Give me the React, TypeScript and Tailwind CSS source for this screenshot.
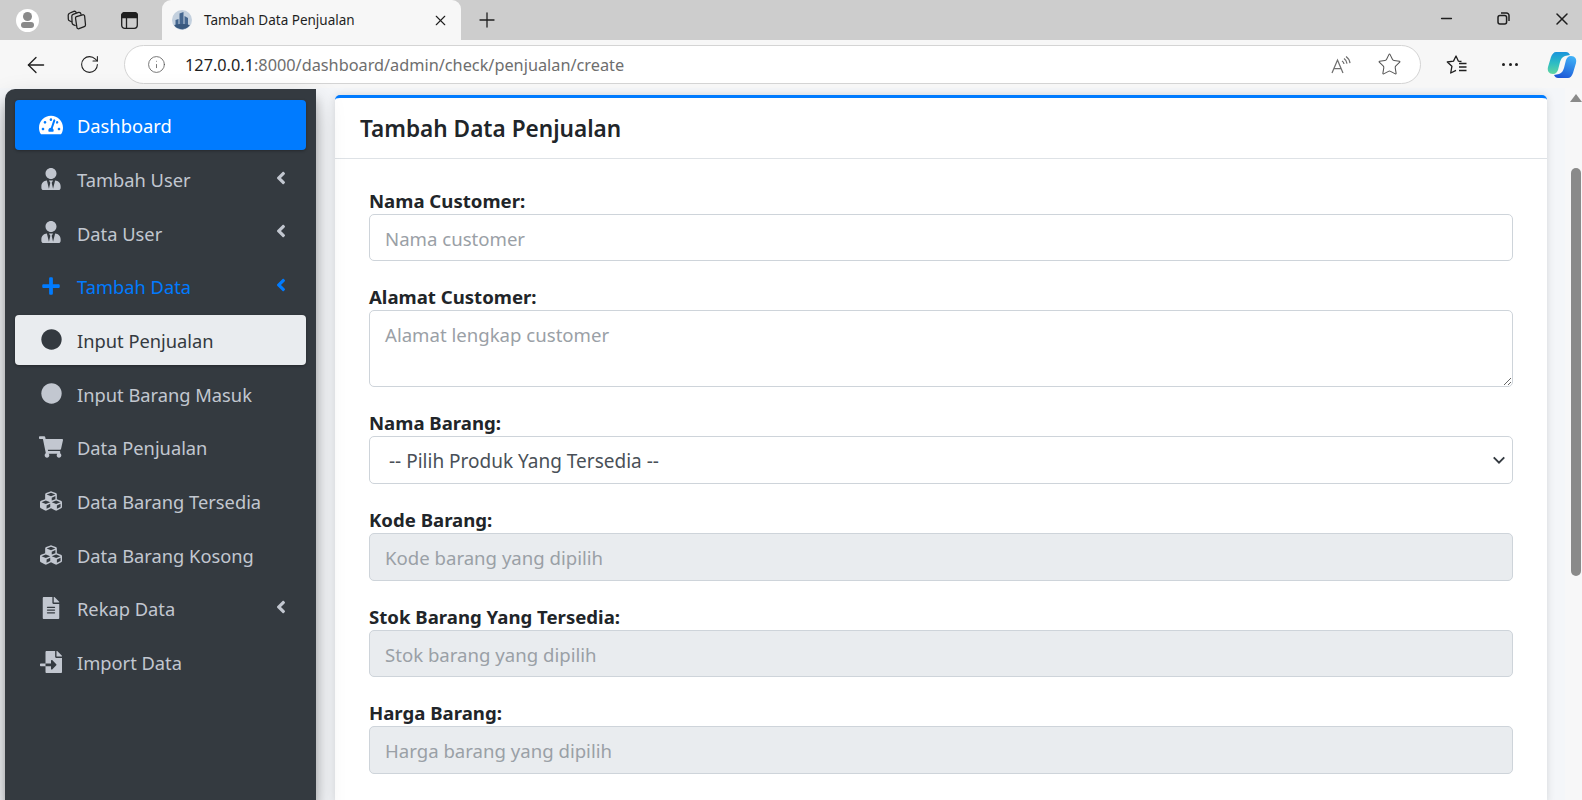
import { ReactNode } from "react";
import { ArrowLeft, Info, Minus, Plus, RotateCw, Star, X } from "lucide-react";
import {
  FaAngleLeft,
  FaCircle,
  FaCubes,
  FaFileAlt,
  FaFileImport,
  FaPlus,
  FaShoppingCart,
  FaTachometerAlt,
  FaUserTie,
} from "react-icons/fa";

const CollectionsIcon = () => (
  <svg width="20" height="20" viewBox="0 0 20 20" fill="none" stroke="#1f1f1f" strokeWidth="1.25" strokeLinejoin="round">
    <path d="M9.5 6.600 15.600 4.800a1.600 1.600 0 0 1 2 1.100l.9 8.700a1.800 1.800 0 0 1-1.200 2l-5.300 2.100a1.600 1.600 0 0 1-2.100-1.300L8.500 8.200a1.500 1.500 0 0 1 1-1.600z" />
    <path d="M8.700 15.800 6.200 14.600a2 2 0 0 1-1.100-1.700L4.800 6.300a2 2 0 0 1 1.300-2L11.500 2.400a1.800 1.800 0 0 1 2 .6l.8 1.700" />
    <path d="M4.900 12 2.400 10.800A2 2 0 0 1 1.300 9L1.200 5.200A2 2 0 0 1 2.500 3.300L6.800 1.400a1.800 1.800 0 0 1 2 .5l.7 1" />
  </svg>
);

const TabsIcon = () => (
  <svg width="17" height="17" viewBox="0 0 17 17" fill="none" stroke="#1f1f1f" strokeWidth="1.3">
    <rect x="0.700" y="0.700" width="15.600" height="15.600" rx="3" />
    <path d="M.7 3.700a3 3 0 0 1 3-3h9.600a3 3 0 0 1 3 3V5.500H.7z" fill="#1f1f1f" />
    <path d="M5.500 5.500v10.800" />
  </svg>
);

const ProfileIcon = () => (
  <div className="flex h-[23px] w-[23px] flex-col items-center justify-center rounded-full bg-white">
    <div className="h-[9px] w-[9px] rounded-full bg-[#8a8a8a]" />
    <div className="mt-[1px] h-[6px] w-[13px] rounded-[3px] bg-[#8a8a8a]" />
  </div>
);

const Favicon = () => (
  <svg width="20" height="20" viewBox="0 0 20 20">
    <circle cx="10" cy="10" r="10" fill="#c3d0de" />
    <path d="M3.500 17V10l3-1v9.500zM7.500 19V3.500l4-1.500v17.500zM12.500 19V6l3.500 2v9z" fill="#44668f" />
    <path d="M2 15c4-1.500 12-1.500 16 0a10 10 0 0 1-16 0z" fill="#39597f" />
  </svg>
);

const ReadAloudIcon = () => (
  <svg width="20" height="18" viewBox="0 0 20 18" fill="none" stroke="#6f6f6f" strokeWidth="1.25">
    <path d="M1 17 6.500 4 12 17M3 12.500h7" />
    <path d="M11 5a4 4 0 0 1 2 3M13 2.600a7 7 0 0 1 3 5M15 .6a9.500 9.500 0 0 1 4 6.600" />
  </svg>
);

const FavoritesIcon = () => (
  <svg width="21" height="20" viewBox="0 0 21 20" fill="none" stroke="#1f1f1f" strokeWidth="1.3">
    <path d="M15.500 6.500 12.300 6.100 10 1 7.500 6.100 1.300 7 5.900 11.300 4.700 18 10 15.300" strokeLinejoin="round" />
    <path d="M13 8.500h7.500M13 12h7.500M13 15.500h7.500" />
  </svg>
);

const RestoreIcon = () => (
  <svg width="13" height="13" viewBox="0 0 13 13" fill="none" stroke="#1f1f1f" strokeWidth="1.5">
    <rect x="1" y="3.400" width="8.600" height="8.600" rx="2" />
    <path d="M4 1h5.500A2.500 2.500 0 0 1 12 3.500V9" />
  </svg>
);

const CopilotIcon = () => (
  <svg width="30" height="28" viewBox="0 0 30 28">
    <defs>
      <linearGradient id="cop-a" x1="0.500" y1="1" x2="0.500" y2="0">
        <stop offset="0" stopColor="#62d6a0" />
        <stop offset="0.500" stopColor="#2cbcc4" />
        <stop offset="1" stopColor="#1a94dc" />
      </linearGradient>
      <linearGradient id="cop-b" x1="0.300" y1="1" x2="0.700" y2="0">
        <stop offset="0" stopColor="#1c56d6" />
        <stop offset="1" stopColor="#3fb0f6" />
      </linearGradient>
    </defs>
    <path d="M9 1H19C21 1 22 2 23 4L18 5C15 6 14 8 13 11L11 19C10 21 9 23 6 23C2 23 0 20 1 16L4 6C5 3 7 1 9 1Z" fill="url(#cop-a)" />
    <path d="M21 27H11C9 27 8 26 7 24L12 23C15 22 16 20 17 17L19 9C20 7 21 5 24 5C28 5 30 8 29 12L26 22C25 25 23 27 21 27Z" fill="url(#cop-b)" />
  </svg>
);

type NavItem = {
  label: string;
  icon: ReactNode;
  chevron?: boolean;
  state?: "primary" | "open" | "current";
};

const navItems: NavItem[] = [
  { label: "Dashboard", icon: <FaTachometerAlt size={24} />, state: "primary" },
  { label: "Tambah User", icon: <FaUserTie size={22} />, chevron: true },
  { label: "Data User", icon: <FaUserTie size={22} />, chevron: true },
  { label: "Tambah Data", icon: <FaPlus size={20} />, chevron: true, state: "open" },
  { label: "Input Penjualan", icon: <FaCircle size={21} />, state: "current" },
  { label: "Input Barang Masuk", icon: <FaCircle size={21} /> },
  { label: "Data Penjualan", icon: <FaShoppingCart size={24} /> },
  { label: "Data Barang Tersedia", icon: <FaCubes size={22} /> },
  { label: "Data Barang Kosong", icon: <FaCubes size={22} /> },
  { label: "Rekap Data", icon: <FaFileAlt size={22} />, chevron: true },
  { label: "Import Data", icon: <FaFileImport size={22} /> },
];

const itemStyles = {
  primary: "bg-[#007bff] text-white shadow-[0_1px_3px_rgba(0,0,0,0.3)]",
  open: "text-[#007bff]",
  current: "bg-[#e9ecef] text-[#343a40] shadow-[0_1px_3px_rgba(0,0,0,0.3)]",
};

const Sidebar = () => (
  <aside className="relative z-10 ml-[5px] mt-[1px] flex w-[311px] shrink-0 flex-col gap-[3.700px] rounded-tl-[10px] bg-[#343a40] px-[10px] pt-[11px] shadow-[0_14px_28px_rgba(0,0,0,0.25),0_10px_10px_rgba(0,0,0,0.22)]">
    {navItems.map((item) => (
      <div
        key={item.label}
        className={`flex h-[50px] shrink-0 items-center rounded-[4px] pl-[24px] pr-[15px] text-[18.300px] ${
          item.state ? itemStyles[item.state] : "text-[#c2c7d0]"
        }`}
      >
        <span className="flex w-[24px] justify-center">{item.icon}</span>
        <span className="ml-[14px] flex-1 pt-[2px]">{item.label}</span>
        {item.chevron && <FaAngleLeft size={20} className="-mt-[2px]" />}
      </div>
    ))}
  </aside>
);

const fieldClass =
  "block w-full rounded-[5px] border border-[#ced4da] px-[15px] text-[18.600px] text-[#495057] placeholder:text-[#9aa0a6] outline-none";

const Label = ({ children }: { children: ReactNode }) => (
  <label className="mb-[2px] block h-[25px] text-[18.600px] leading-[28px] font-bold text-[#212529]">{children}</label>
);

const ReadonlyField = ({ label, placeholder }: { label: string; placeholder: string }) => (
  <div>
    <Label>{label}</Label>
    <input disabled placeholder={placeholder} className={`${fieldClass} h-[47.500px] bg-[#e9ecef] pt-[2px]`} />
  </div>
);

export default function App() {
  return (
    <div className="flex h-[800px] w-[1582px] flex-col overflow-hidden bg-[#f4f6f9] font-['Noto_Sans',sans-serif]">
      {/* tab strip */}
      <div className="flex h-[40px] shrink-0 items-center bg-[#cdcdcd] pl-[16px]">
        <ProfileIcon />
        <span className="ml-[28px]"><CollectionsIcon /></span>
        <span className="ml-[34px]"><TabsIcon /></span>
        <div className="ml-[24px] flex h-[40px] w-[299px] items-center self-end rounded-t-[9px] bg-[#f7f7f7] pl-[10px] pr-[12px]">
          <Favicon />
          <span className="ml-[12px] flex-1 whitespace-nowrap text-[13.500px] text-[#1f1f1f]">Tambah Data Penjualan</span>
          <X size={17} strokeWidth={1.6} color="#1f1f1f" />
        </div>
        <Plus size={24} strokeWidth={1.3} color="#1f1f1f" className="ml-[14px]" />
        <div className="ml-auto flex items-center gap-[42px] pb-[3px] pr-[10px]">
          <Minus size={17} strokeWidth={1.8} color="#1f1f1f" />
          <RestoreIcon />
          <X size={20} strokeWidth={1.8} color="#1f1f1f" />
        </div>
      </div>

      {/* address bar */}
      <div className="flex h-[48px] shrink-0 items-center bg-[#f7f7f7] pl-[23px] pr-[4px] pt-[1px]">
        <ArrowLeft size={26} strokeWidth={1.2} color="#1f1f1f" />
        <RotateCw size={21} strokeWidth={1.2} color="#1f1f1f" className="ml-[30px]" />
        <div className="ml-[24px] flex h-[39px] w-[1297px] items-center rounded-full border border-[#d4d4d4] bg-white pl-[22px] pr-[18px]">
          <Info size={19} strokeWidth={1} color="#555555" />
          <span className="ml-[19px] flex-1 pt-[1px] text-[16.300px] text-[#6e6e6e]">
            <span className="text-[#1f1f1f]">127.0.0.1</span>:8000/dashboard/admin/check/penjualan/create
          </span>
          <ReadAloudIcon />
          <Star size={25} strokeWidth={1} color="#555555" className="ml-[26px]" />
        </div>
        <span className="ml-[25px]"><FavoritesIcon /></span>
        <div className="ml-[35px] flex gap-[3.500px]">
          <span className="h-[3px] w-[3px] rounded-full bg-[#1f1f1f]" />
          <span className="h-[3px] w-[3px] rounded-full bg-[#1f1f1f]" />
          <span className="h-[3px] w-[3px] rounded-full bg-[#1f1f1f]" />
        </div>
        <span className="ml-[29px]"><CopilotIcon /></span>
      </div>

      <div className="flex min-h-0 flex-1">
        <Sidebar />

        {/* content */}
        <main className="min-w-0 flex-1 pl-[19px] pr-[18px] pt-[7px]">
          <div className="rounded-t-[5px] border-t-[3px] border-[#007bff] bg-white shadow-[0_0_8px_rgba(0,0,0,0.13)]">
            <div className="flex h-[61px] items-center border-b border-[#dee2e6] pl-[25px]">
              <h1 className="pt-[2px] text-[22.600px] font-semibold text-[#212529]">Tambah Data Penjualan</h1>
            </div>
            <form className="flex flex-col gap-[22px] px-[34px] pb-[30px] pt-[28px]">
              <div>
                <Label>Nama Customer:</Label>
                <input placeholder="Nama customer" className={`${fieldClass} h-[47px] bg-white pt-[2px]`} />
              </div>
              <div>
                <Label>Alamat Customer:</Label>
                <textarea
                  placeholder="Alamat lengkap customer"
                  className={`${fieldClass} h-[77px] bg-white pb-[9px] pt-[11px] leading-[26px]`}
                />
              </div>
              <div>
                <Label>Nama Barang:</Label>
                <div className="relative">
                  <select className={`${fieldClass} h-[48px] appearance-none bg-white pl-[19px] pt-[3px] text-[19px] text-[#343a40]`}>
                    <option>-- Pilih Produk Yang Tersedia --</option>
                  </select>
                  <svg
                    width="14"
                    height="14"
                    viewBox="0 0 16 16"
                    fill="none"
                    stroke="#343a40"
                    strokeWidth="2.200"
                    className="absolute right-[7px] top-[17px]"
                  >
                    <path d="M2 5l6 6 6-6" />
                  </svg>
                </div>
              </div>
              <ReadonlyField label="Kode Barang:" placeholder="Kode barang yang dipilih" />
              <ReadonlyField label="Stok Barang Yang Tersedia:" placeholder="Stok barang yang dipilih" />
              <ReadonlyField label="Harga Barang:" placeholder="Harga barang yang dipilih" />
            </form>
          </div>
        </main>

        {/* page scrollbar */}
        <div className="flex w-[17px] shrink-0 flex-col items-center bg-[#f7f7f8] pl-[5px] pt-[6px]">
          <div className="h-0 w-0 border-x-[6px] border-b-[8px] border-x-transparent border-b-[#8a8a8a]" />
          <div className="mt-[66px] h-[408px] w-[10px] rounded-full bg-[#8a8a8a]" />
        </div>
      </div>
    </div>
  );
}
